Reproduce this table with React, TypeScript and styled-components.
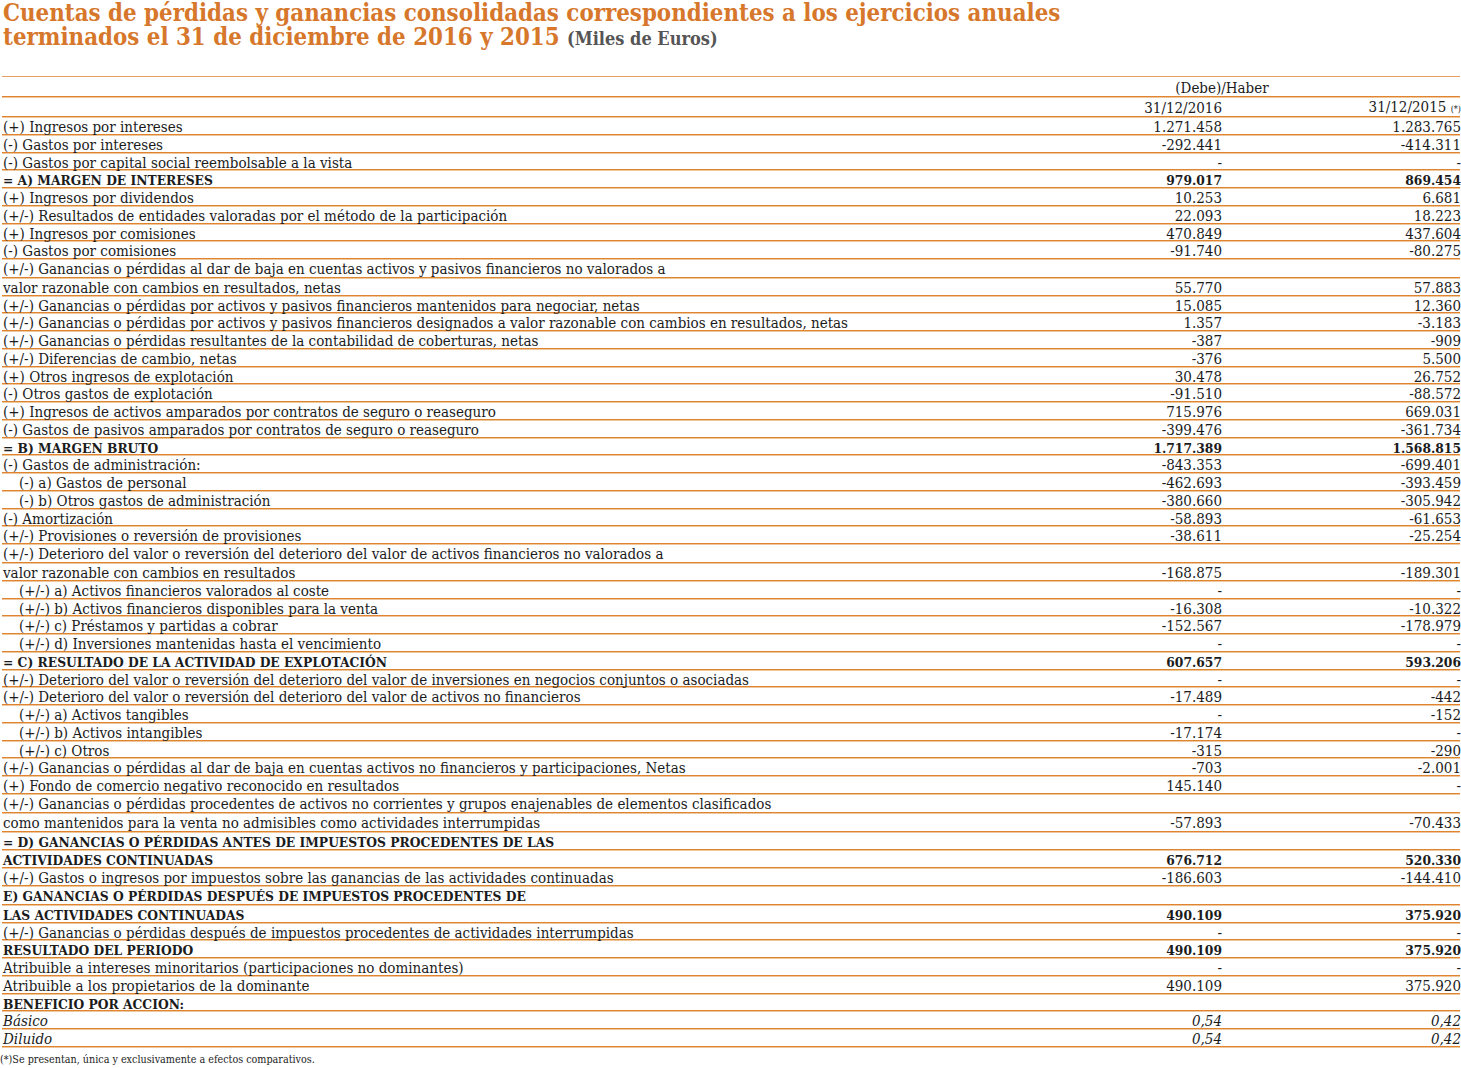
import React from 'react'
import styled, { createGlobalStyle } from 'styled-components'

type Kind = 'normal' | 'bold' | 'italic'

type Row = {
  label: string
  y2016?: string
  y2015?: string
  kind?: Kind
  indent?: boolean
  tall?: boolean
}

const rows: Row[] = [
  { label: '(+) Ingresos por intereses', y2016: '1.271.458', y2015: '1.283.765' },
  { label: '(-) Gastos por intereses', y2016: '-292.441', y2015: '-414.311' },
  { label: '(-) Gastos por capital social reembolsable a la vista', y2016: '-', y2015: '-' },
  { label: '= A) MARGEN DE INTERESES', y2016: '979.017', y2015: '869.454', kind: 'bold' },
  { label: '(+) Ingresos por dividendos', y2016: '10.253', y2015: '6.681' },
  { label: '(+/-) Resultados de entidades valoradas por el método de la participación', y2016: '22.093', y2015: '18.223' },
  { label: '(+) Ingresos por comisiones', y2016: '470.849', y2015: '437.604' },
  { label: '(-) Gastos por comisiones', y2016: '-91.740', y2015: '-80.275' },
  { label: '(+/-) Ganancias o pérdidas al dar de baja en cuentas activos y pasivos financieros no valorados a', tall: true },
  { label: 'valor razonable con cambios en resultados, netas', y2016: '55.770', y2015: '57.883' },
  { label: '(+/-) Ganancias o pérdidas por activos y pasivos financieros mantenidos para negociar, netas', y2016: '15.085', y2015: '12.360' },
  { label: '(+/-) Ganancias o pérdidas por activos y pasivos financieros designados a valor razonable con cambios en resultados, netas', y2016: '1.357', y2015: '-3.183' },
  { label: '(+/-) Ganancias o pérdidas resultantes de la contabilidad de coberturas, netas', y2016: '-387', y2015: '-909' },
  { label: '(+/-) Diferencias de cambio, netas', y2016: '-376', y2015: '5.500' },
  { label: '(+) Otros ingresos de explotación', y2016: '30.478', y2015: '26.752' },
  { label: '(-) Otros gastos de explotación', y2016: '-91.510', y2015: '-88.572' },
  { label: '(+) Ingresos de activos amparados por contratos de seguro o reaseguro', y2016: '715.976', y2015: '669.031' },
  { label: '(-) Gastos de pasivos amparados por contratos de seguro o reaseguro', y2016: '-399.476', y2015: '-361.734' },
  { label: '= B) MARGEN BRUTO', y2016: '1.717.389', y2015: '1.568.815', kind: 'bold' },
  { label: '(-) Gastos de administración:', y2016: '-843.353', y2015: '-699.401' },
  { label: '(-) a) Gastos de personal', y2016: '-462.693', y2015: '-393.459', indent: true },
  { label: '(-) b) Otros gastos de administración', y2016: '-380.660', y2015: '-305.942', indent: true },
  { label: '(-) Amortización', y2016: '-58.893', y2015: '-61.653' },
  { label: '(+/-) Provisiones o reversión de provisiones', y2016: '-38.611', y2015: '-25.254' },
  { label: '(+/-) Deterioro del valor o reversión del deterioro del valor de activos financieros no valorados a', tall: true },
  { label: 'valor razonable con cambios en resultados', y2016: '-168.875', y2015: '-189.301' },
  { label: '(+/-) a) Activos financieros valorados al coste', y2016: '-', y2015: '-', indent: true },
  { label: '(+/-) b) Activos financieros disponibles para la venta', y2016: '-16.308', y2015: '-10.322', indent: true },
  { label: '(+/-) c) Préstamos y partidas a cobrar', y2016: '-152.567', y2015: '-178.979', indent: true },
  { label: '(+/-) d) Inversiones mantenidas hasta el vencimiento', y2016: '-', y2015: '-', indent: true },
  { label: '= C) RESULTADO DE LA ACTIVIDAD DE EXPLOTACIÓN', y2016: '607.657', y2015: '593.206', kind: 'bold' },
  { label: '(+/-) Deterioro del valor o reversión del deterioro del valor de inversiones en negocios conjuntos o asociadas', y2016: '-', y2015: '-' },
  { label: '(+/-) Deterioro del valor o reversión del deterioro del valor de activos no financieros', y2016: '-17.489', y2015: '-442' },
  { label: '(+/-) a) Activos tangibles', y2016: '-', y2015: '-152', indent: true },
  { label: '(+/-) b) Activos intangibles', y2016: '-17.174', y2015: '-', indent: true },
  { label: '(+/-) c) Otros', y2016: '-315', y2015: '-290', indent: true },
  { label: '(+/-) Ganancias o pérdidas al dar de baja en cuentas activos no financieros y participaciones, Netas', y2016: '-703', y2015: '-2.001' },
  { label: '(+) Fondo de comercio negativo reconocido en resultados', y2016: '145.140', y2015: '-' },
  { label: '(+/-) Ganancias o pérdidas procedentes de activos no corrientes y grupos enajenables de elementos clasificados', tall: true },
  { label: 'como mantenidos para la venta no admisibles como actividades interrumpidas', y2016: '-57.893', y2015: '-70.433', tall: true },
  { label: '= D) GANANCIAS O PÉRDIDAS ANTES DE IMPUESTOS PROCEDENTES DE LAS', kind: 'bold', tall: true },
  { label: 'ACTIVIDADES CONTINUADAS', y2016: '676.712', y2015: '520.330', kind: 'bold' },
  { label: '(+/-) Gastos o ingresos por impuestos sobre las ganancias de las actividades continuadas', y2016: '-186.603', y2015: '-144.410' },
  { label: 'E) GANANCIAS O PÉRDIDAS DESPUÉS DE IMPUESTOS PROCEDENTES DE', kind: 'bold', tall: true },
  { label: 'LAS ACTIVIDADES CONTINUADAS', y2016: '490.109', y2015: '375.920', kind: 'bold' },
  { label: '(+/-) Ganancias o pérdidas después de impuestos procedentes de actividades interrumpidas', y2016: '-', y2015: '-' },
  { label: 'RESULTADO DEL PERIODO', y2016: '490.109', y2015: '375.920', kind: 'bold' },
  { label: 'Atribuible a intereses minoritarios (participaciones no dominantes)', y2016: '-', y2015: '-' },
  { label: 'Atribuible a los propietarios de la dominante', y2016: '490.109', y2015: '375.920' },
  { label: 'BENEFICIO POR ACCION:', kind: 'bold' },
  { label: 'Básico', y2016: '0,54', y2015: '0,42', kind: 'italic' },
  { label: 'Diluido', y2016: '0,54', y2015: '0,42', kind: 'italic' },
]

const GlobalStyle = createGlobalStyle`
  body {
    margin: 0;
    background: #ffffff;
    color: #1b1b1b;
    font-family: "DejaVu Serif Condensed", "DejaVu Serif", serif;
  }
`

const App: React.FC = () => (
  <Page>
    <GlobalStyle />
    <Title>
      <TitleLine>Cuentas de pérdidas y ganancias consolidadas correspondientes a los ejercicios anuales</TitleLine>
      <TitleLine>
        terminados el 31 de diciembre de 2016 y 2015 <Units>(Miles de Euros)</Units>
      </TitleLine>
    </Title>
    <Table>
      <HeaderRow>
        <Label />
        <GroupHead>(Debe)/Haber</GroupHead>
      </HeaderRow>
      <HeaderRow>
        <Label />
        <Amount>31/12/2016</Amount>
        <Amount>
          31/12/2015 <Note>(*)</Note>
        </Amount>
      </HeaderRow>
      {rows.map((row, i) => (
        <BodyRow key={i} $kind={row.kind ?? 'normal'} $tall={!!row.tall}>
          <Label $indent={!!row.indent}>{row.label}</Label>
          <Amount>{row.y2016}</Amount>
          <Amount>{row.y2015}</Amount>
        </BodyRow>
      ))}
    </Table>
    <Footnote>(*)Se presentan, única y exclusivamente a efectos comparativos.</Footnote>
  </Page>
)

const Page = styled.div`
  width: 1461px;
  padding: 0 1px 0 2px;
  box-sizing: border-box;
`

const Title = styled.h1`
  margin: 0 0 0 1px;
  padding-top: 1px;
  height: 75px;
  font-family: "DejaVu Serif Condensed", "DejaVu Serif", serif;
  font-size: 23.8px;
  font-weight: 700;
  color: #d6772b;
`

const TitleLine = styled.div`
  height: 24px;
  line-height: 24px;
  white-space: nowrap;
`

const Units = styled.span`
  font-size: 18px;
  color: #555555;
`

const Table = styled.div`
  display: flex;
  flex-direction: column;
  border-top: 1px solid #e6a064;
`

const Line = styled.div`
  display: grid;
  grid-template-columns: 981px 239px 239px;
  align-items: center;
  border-bottom: 1px solid #e0842f;
  box-shadow: 0 1px 0 #efc79f;
  font-size: 15px;
  line-height: 15px;
`

const HeaderRow = styled(Line)`
  height: 20px;
  box-sizing: border-box;
  padding-top: 3px;
`

const BodyRow = styled(Line)<{ $kind: Kind; $tall: boolean }>`
  height: ${(p) => (p.$tall ? '18.9px' : '17.75px')};
  box-sizing: border-box;
  padding-top: 3px;
  font-size: ${(p) => (p.$kind === 'bold' ? '13.7px' : '15px')};
  font-weight: ${(p) => (p.$kind === 'bold' ? 700 : 400)};
  font-style: ${(p) => (p.$kind === 'italic' ? 'italic' : 'normal')};
`

const Label = styled.div<{ $indent?: boolean }>`
  padding-left: ${(p) => (p.$indent ? '17px' : '1px')};
  white-space: nowrap;
`

const Amount = styled.div`
  text-align: right;
  white-space: nowrap;
`

const GroupHead = styled.div`
  grid-column: 2 / 4;
  text-align: center;
`

const Note = styled.span`
  font-size: 9px;
`

const Footnote = styled.div`
  margin: 6px 0 0 -2px;
  font-size: 10.7px;
  color: #1b1b1b;
`

export default App
